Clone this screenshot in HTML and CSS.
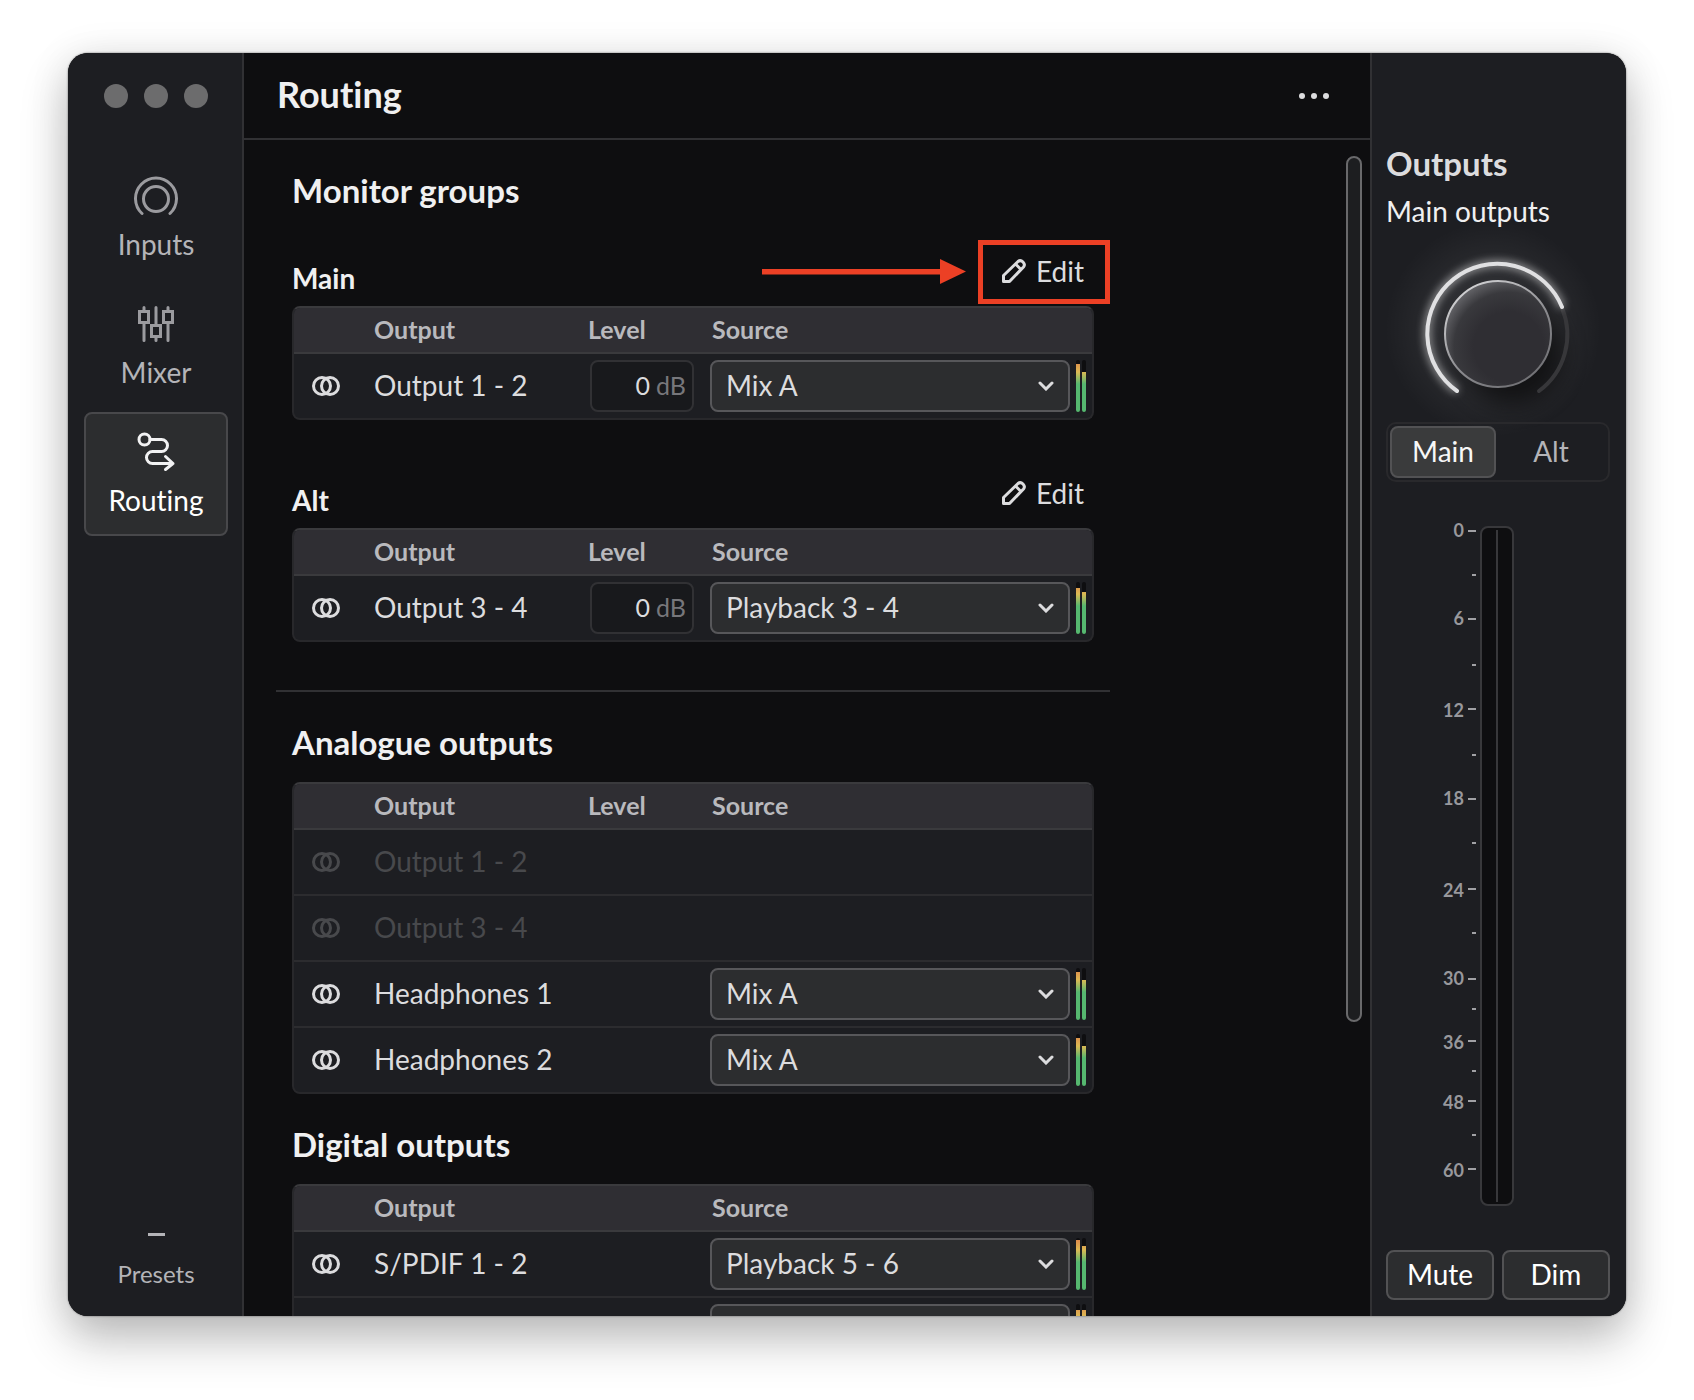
FILE: index.html
```html
<!DOCTYPE html>
<html lang="en">
<head>
<meta charset="utf-8">
<title>Routing</title>
<link rel="stylesheet" href="styles.css">
</head>
<body>
<svg class="defs" aria-hidden="true">
  <symbol id="stereo" viewBox="0 0 28 20"><g fill="none" stroke="currentColor" stroke-width="3"><circle cx="10" cy="10" r="8.5"/><circle cx="18" cy="10" r="8.5"/></g></symbol>
  <symbol id="pencil" viewBox="0 0 24 24"><path d="M1.500 22.500V16.500L16 2.500Q18.500 .5 21 3T21.500 8L7.500 22.500ZM13.500 5L19 10.500" fill="none" stroke="currentColor" stroke-width="3" stroke-linejoin="round"/></symbol>
</svg>
<div class="window">
  <aside class="sidebar">
    <div class="lights"><i></i><i></i><i></i></div>
    <nav class="nav">
      <a class="nav-item" href="#inputs">
        <svg width="44" height="40" viewBox="0 0 44 40" fill="none" stroke="currentColor" stroke-width="3" stroke-linecap="round"><circle cx="22" cy="23" r="12.500"/><path d="M8 37.500A20.500 20.500 0 1 1 36 37.500"/></svg>
        Inputs</a>
      <a class="nav-item" href="#mixer">
        <svg width="44" height="40" viewBox="0 0 44 40" fill="none" stroke="currentColor" stroke-width="3" stroke-linecap="round"><path d="M10 3.500V7M10 19V36.500M22 3.500V21M22 33V36.500M34 3.500V7M34 19V36.500"/><path d="M5.500 7.500H14.500V18.500H5.500ZM17.500 21.500H26.500V32.500H17.500ZM29.500 7.500H38.500V18.500H29.500Z"/></svg>
        Mixer</a>
      <a class="nav-item active" href="#routing">
        <svg width="44" height="40" viewBox="0 0 44 40" fill="none" stroke="currentColor" stroke-width="3" stroke-linecap="round" stroke-linejoin="round"><circle cx="10.500" cy="7.500" r="5.500"/><path d="M16 7.500H27.500A6 6 0 0 1 27.500 19.500H18.500A6 6 0 0 0 18.500 31.500H39M31.500 24.500L39 31.500L31.500 37.500"/></svg>
        Routing</a>
    </nav>
    <button class="presets"><i class="dash"></i>Presets</button>
  </aside>
  <main class="main">
    <header class="topbar"><h1>Routing</h1><button class="more" aria-label="More"><i></i><i></i><i></i></button></header>
    <div class="scroll">
      <div class="content">
        <section class="monitors">
          <h2>Monitor groups</h2>
          <div class="group-head"><h3>Main</h3><div class="callout"><svg class="arrow" width="204" height="26" viewBox="0 0 204 26" fill="#ec4025"><path d="M0 10H178V0L204 12.500L178 25V15.500H0Z"/></svg><button class="edit marked"><svg width="24" height="24"><use href="#pencil"/></svg>Edit</button></div></div>
          <table>
            <thead><tr><th class="c-icon"></th><th class="c-name">Output</th><th class="c-level">Level</th><th>Source</th></tr></thead>
            <tbody><tr><td><svg class="stereo"><use href="#stereo"/></svg></td><td>Output 1 - 2</td><td><label class="level"><input value="0" aria-label="Output 1 - 2 level">dB</label></td><td><div class="source"><select aria-label="Output 1 - 2 source"><option>Mix A</option></select><span class="meter"><i><b style="height:48px"></b></i><i><b style="height:40px"></b></i></span></div></td></tr></tbody>
          </table>
          <div class="group-head"><h3>Alt</h3><button class="edit"><svg width="24" height="24"><use href="#pencil"/></svg>Edit</button></div>
          <table>
            <thead><tr><th class="c-icon"></th><th class="c-name">Output</th><th class="c-level">Level</th><th>Source</th></tr></thead>
            <tbody><tr><td><svg class="stereo"><use href="#stereo"/></svg></td><td>Output 3 - 4</td><td><label class="level"><input value="0" aria-label="Output 3 - 4 level">dB</label></td><td><div class="source"><select aria-label="Output 3 - 4 source"><option>Playback 3 - 4</option></select><span class="meter"><i><b style="height:46px"></b></i><i><b style="height:42px"></b></i></span></div></td></tr></tbody>
          </table>
        </section>
        <section>
          <h2>Analogue outputs</h2>
          <table>
            <thead><tr><th class="c-icon"></th><th class="c-name">Output</th><th class="c-level">Level</th><th>Source</th></tr></thead>
            <tbody>
              <tr class="off"><td><svg class="stereo"><use href="#stereo"/></svg></td><td>Output 1 - 2</td><td></td><td></td></tr>
              <tr class="off"><td><svg class="stereo"><use href="#stereo"/></svg></td><td>Output 3 - 4</td><td></td><td></td></tr>
              <tr><td><svg class="stereo"><use href="#stereo"/></svg></td><td>Headphones 1</td><td></td><td><div class="source"><select aria-label="Headphones 1 source"><option>Mix A</option></select><span class="meter"><i><b style="height:48px"></b></i><i><b style="height:40px"></b></i></span></div></td></tr>
              <tr><td><svg class="stereo"><use href="#stereo"/></svg></td><td>Headphones 2</td><td></td><td><div class="source"><select aria-label="Headphones 2 source"><option>Mix A</option></select><span class="meter"><i><b style="height:48px"></b></i><i><b style="height:40px"></b></i></span></div></td></tr>
            </tbody>
          </table>
        </section>
        <section>
          <h2>Digital outputs</h2>
          <table>
            <thead><tr><th class="c-icon"></th><th class="c-name">Output</th><th class="c-level"></th><th>Source</th></tr></thead>
            <tbody>
              <tr><td><svg class="stereo"><use href="#stereo"/></svg></td><td>S/PDIF 1 - 2</td><td></td><td><div class="source"><select aria-label="S/PDIF 1 - 2 source"><option>Playback 5 - 6</option></select><span class="meter"><i><b style="height:50px"></b></i><i><b style="height:44px"></b></i></span></div></td></tr>
              <tr><td></td><td></td><td></td><td><div class="source"><select aria-label="Digital output source"><option></option></select><span class="meter"><i><b style="height:46px"></b></i><i><b style="height:46px"></b></i></span></div></td></tr>
            </tbody>
          </table>
        </section>
      </div>
      <div class="track"><div class="thumb"></div></div>
    </div>
  </main>
  <aside class="outputs">
    <h2>Outputs</h2>
    <p>Main outputs</p>
    <svg class="knob" viewBox="0 0 224 200" role="img" aria-label="Main output level">
      <defs>
        <linearGradient id="rim" x1="0.1" y1="0" x2="0.8" y2="1"><stop offset="0" stop-color="#dddddf"/><stop offset=".6" stop-color="#89898d"/><stop offset="1" stop-color="#6e6e72"/></linearGradient>
        <radialGradient id="face" cx=".6" cy=".62" r=".66"><stop offset=".5" stop-color="#2f2e33"/><stop offset=".78" stop-color="#39393d"/><stop offset="1" stop-color="#66666a"/></radialGradient>
        <radialGradient id="halo"><stop offset=".4" stop-color="#fff" stop-opacity=".08"/><stop offset="1" stop-color="#fff" stop-opacity="0"/></radialGradient>
        <filter id="glow" x="-30%" y="-30%" width="160%" height="160%" color-interpolation-filters="sRGB"><feGaussianBlur stdDeviation="4"/></filter>
        <filter id="shade" x="-50%" y="-50%" width="200%" height="200%" color-interpolation-filters="sRGB"><feGaussianBlur stdDeviation="12"/></filter>
      </defs>
      <circle cx="107" cy="95" r="108" fill="url(#halo)"/>
      <circle cx="126" cy="120" r="50" fill="#0c0c0d" opacity=".8" filter="url(#shade)"/>
      <path d="M176 74A70 70 0 0 1 153 157" fill="none" stroke="#37373a" stroke-width="4" stroke-linecap="round"/>
      <path d="M71 157A70 70 0 1 1 176 73" fill="none" stroke="#fff" stroke-opacity=".6" stroke-width="6" filter="url(#glow)"/>
      <path d="M71 157A70 70 0 1 1 176 73" fill="none" stroke="#e0e0e2" stroke-width="4" stroke-linecap="round"/>
      <circle cx="112" cy="100" r="53" fill="url(#face)" stroke="url(#rim)" stroke-width="2"/>
    </svg>
    <div class="segment"><button class="on">Main</button><button>Alt</button></div>
    <svg class="scale" width="120" height="680" viewBox="0 0 120 680">
      <rect x="69" y="1" width="32" height="678" rx="7" fill="#0e0e10" stroke="#38383b" stroke-width="2"/>
      <path d="M85 4V676" stroke="#38383b" stroke-width="2"/>
      <path d="M56 5H64M56 93H64M56 183H64M56 273H64M56 363H64M56 453H64M56 515H64M56 575H64M56 643H64M60 49H64M60 139H64M60 229H64M60 317H64M60 407H64M60 483H64M60 545H64M60 609H64" stroke="#a1a1a5" stroke-width="2"/>
      <g class="ticks"><text x="52" y="11">0</text><text x="52" y="99">6</text><text x="52" y="191">12</text><text x="52" y="279">18</text><text x="52" y="371">24</text><text x="52" y="459">30</text><text x="52" y="523">36</text><text x="52" y="583">48</text><text x="52" y="651">60</text></g>
    </svg>
    <div class="actions"><button>Mute</button><button>Dim</button></div>
  </aside>
</div>
</body>
</html>
```
FILE: styles.css
```css
* { box-sizing: border-box; }
body {
  margin: 0;
  padding: 53px 68px 84px;
  min-height: 100vh;
  display: flex;
  background: #fff;
  color: #dcdcde;
  font: 28px/36px Lato, "Open Sans", sans-serif;
  font-variant-ligatures: none;
}
button, input, select { font: inherit; font-variant-ligatures: none; color: inherit; margin: 0; }
button { background: none; border: 0; padding: 0; }
h1, h2, h3, p { margin: 0; }
h1 { font-size: 36px; line-height: 44px; color: #f0f0f1; }
h2 { font-size: 33px; line-height: 40px; color: #f0f0f1; }
h3 { font-size: 28px; line-height: 36px; color: #f0f0f1; }
.defs { position: absolute; width: 0; height: 0; }

.window {
  flex: 1;
  display: flex;
  height: calc(100vh - 137px);
  border-radius: 20px;
  overflow: hidden;
  background: #0e0e10;
  box-shadow: 0 0 2px rgba(0, 0, 0, .6), 0 24px 48px rgba(0, 0, 0, .24), 0 4px 40px rgba(0, 0, 0, .1);
}

.sidebar {
  width: 176px;
  display: flex;
  flex-direction: column;
  background: #1d1e22;
  border-right: 2px solid #313134;
  padding: 31px 14px 24px 16px;
}
.lights { display: flex; justify-content: center; gap: 16px; }
.lights i { width: 24px; height: 24px; border-radius: 50%; background: #6c6c6d; }
.nav { display: flex; flex-direction: column; gap: 4px; margin-top: 48px; }
.nav-item {
  height: 124px;
  display: flex;
  flex-direction: column;
  align-items: center;
  gap: 10px;
  padding-top: 18px;
  border: 2px solid transparent;
  border-radius: 8px;
  color: #b4b4b8;
  text-decoration: none;
}
.nav-item svg { color: #9b9b9f; }
.nav-item.active { background: #2c2d2f; border-color: #48484b; color: #fff; }
.nav-item.active svg { color: #f2f2f3; }
.presets {
  margin-top: auto;
  display: flex;
  flex-direction: column;
  align-items: center;
  gap: 20px;
  color: #b4b4b8;
  font-size: 24px;
  line-height: 36px;
}
.dash { width: 17px; height: 3px; background: #b4b4b8; }

.main { flex: 1; min-width: 0; display: flex; flex-direction: column; }
.topbar {
  height: 87px;
  flex: none;
  display: flex;
  align-items: center;
  justify-content: space-between;
  padding: 0 41px 4px 33px;
  border-bottom: 2px solid #313134;
}
.more { display: flex; gap: 6px; padding: 12px 0 8px; }
.more i { width: 6px; height: 6px; border-radius: 50%; background: #dcdcde; }
.scroll { flex: 1; min-height: 0; display: flex; justify-content: space-between; overflow: hidden; }
.content { width: 834px; margin-left: 32px; }
.content section { padding: 28px 16px 0; }
.content h2 { margin-bottom: 18px; line-height: 44px; }
.content .monitors { padding: 28px 16px 48px; border-bottom: 2px solid #313134; }
.content .monitors h2 { margin-bottom: 2px; }
.group-head { height: 92px; display: flex; justify-content: space-between; align-items: flex-end; padding-bottom: 2px; }
.monitors table + .group-head { height: 108px; }
.group-head h3 { margin-bottom: 8px; }
.edit { display: flex; align-items: center; gap: 10px; height: 64px; padding: 0 10px 2px; }
.callout { display: flex; align-items: center; gap: 12px; margin-right: -16px; }
.edit.marked { border: 5px solid #ec4025; padding: 0 21px 2px 19px; }

table {
  width: 100%;
  table-layout: fixed;
  border-collapse: separate;
  border-spacing: 0;
  background: #1d1e22;
  border: 2px solid #28282b;
  border-top-color: #3a3a3d;
  border-radius: 8px;
  overflow: hidden;
}
th, td { padding: 0; text-align: left; height: 66px; border-top: 2px solid #2c2c2f; }
th { height: 46px; border: 0; border-bottom: 2px solid #3a3a3d; background: #2f2e33; color: #b9b9bd; font-size: 25px; line-height: 32px; padding-bottom: 2px; }
td:nth-child(2) { padding-bottom: 2px; }
tbody tr:first-child td { border-top: 0; height: 64px; }
.c-icon { width: 80px; }
.c-name { width: 214px; }
.c-level { width: 124px; }
.stereo { display: block; width: 28px; height: 20px; margin-left: 18px; }
.off { color: #48494c; }
.level {
  display: flex;
  align-items: center;
  gap: 6px;
  width: 104px;
  height: 52px;
  margin-left: 2px;
  padding: 0 6px 2px 0;
  background: #18191c;
  border: 2px solid #313134;
  border-radius: 8px;
  color: #77777b;
  font-size: 25px;
}
.level input { flex: 1; min-width: 0; padding: 0; border: 0; background: none; color: #dcdcde; text-align: right; }
.source { display: flex; gap: 6px; margin-left: -2px; }
select {
  width: 360px;
  height: 52px;
  padding: 0 16px 2px 14px;
  border: 2px solid #57575a;
  border-radius: 8px;
  appearance: none;
  background: #2c2d2f url("data:image/svg+xml,%3Csvg xmlns='http://www.w3.org/2000/svg' width='16' height='10' fill='none' stroke='%23dcdcde' stroke-width='3' stroke-linecap='round'%3E%3Cpath d='M2 2L8 8L14 2'/%3E%3C/svg%3E") right 14px center no-repeat;
}
.meter { display: flex; gap: 2px; }
.meter i { width: 4px; display: flex; align-items: flex-end; background: #0e0e10; border-radius: 2px; overflow: hidden; }
.meter b { width: 4px; background: linear-gradient(to top, #56b870 28px, #dcb953 40px, #de8a4b 50px); }
.track { width: 16px; margin: 16px 8px 0 0; }
.thumb { height: 866px; border: 2px solid #69696b; border-radius: 8px; background: #1d1e20; }

.outputs {
  width: 256px;
  display: flex;
  flex-direction: column;
  background: #1d1e22;
  border-left: 2px solid #313134;
  padding: 90px 16px 16px 14px;
}
.outputs h2 { color: #dcdcde; }
.outputs p { margin-top: 10px; color: #f0f0f1; }
.knob { width: 224px; height: 200px; margin-top: 5px; overflow: visible; }
.segment { display: flex; padding: 2px; margin-top: -12px; height: 60px; border: 2px solid #29292c; border-radius: 10px; color: #b4b4b8; position: relative; }
.segment button { flex: 1; border-radius: 8px; padding-bottom: 2px; }
.segment .on { flex: 0 0 106px; background: #3a3b3c; border: 2px solid #525254; color: #f7f7f7; }
.scale { margin: 44px 0 0 26px; overflow: visible; }
.ticks { font-size: 18px; font-weight: 700; fill: #98989c; text-anchor: end; }
.actions { display: flex; gap: 8px; margin-top: auto; }
.actions button { flex: 1; height: 50px; padding-bottom: 2px; border: 2px solid #525254; border-radius: 8px; background: #2c2d2f; color: #fff; }
```
